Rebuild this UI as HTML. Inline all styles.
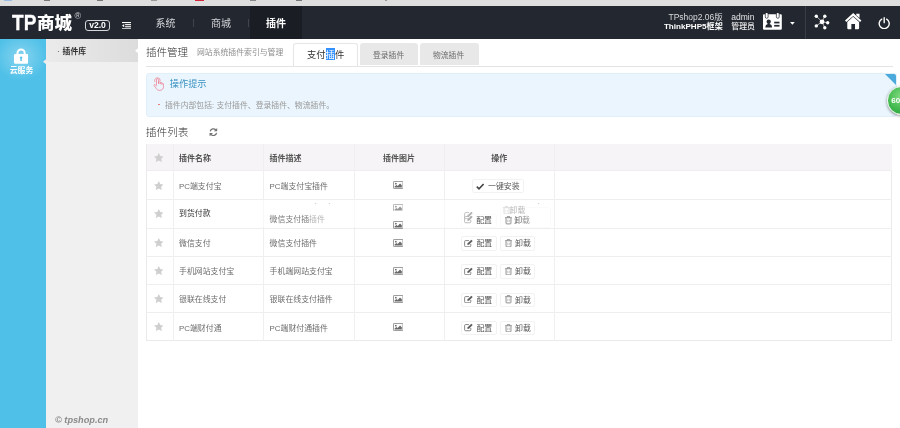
<!DOCTYPE html>
<html lang="zh-CN">
<head>
<meta charset="utf-8">
<title>TPshop 插件管理</title>
<style>
*{box-sizing:border-box;margin:0;padding:0}
html,body{width:900px;height:428px;overflow:hidden;background:#fff}
body{font-family:"Liberation Sans","Noto Sans CJK SC",sans-serif;color:#333;position:relative;font-size:8px;line-height:1}
.a{position:absolute;white-space:nowrap}
#strip{left:0;top:0;width:900px;height:5.5px;background:#dedede}
#hd{left:0;top:5.5px;width:900px;height:33px;background:#23272f}
#hd .act{left:249.5px;top:0;width:52px;height:33px;background:#1a1d24}
#hd .sep{width:1px;height:8px;top:13px;background:#41444c}
.nav{top:19px;font-size:10px;line-height:10px;color:#d4d6da}
#side{left:0;top:38.5px;width:46px;height:390px;background:#4fc0e8}
#sub{left:46px;top:38.5px;width:92px;height:390px;background:#f1f0f1}
#sub .cur{left:0;top:0;width:92px;height:23.5px;background:linear-gradient(90deg,#ebebeb,#dcdcdc)}
#main{left:138px;top:38.5px;width:762px;height:390px;background:#fff}
table{border-collapse:collapse}
.t{font-size:7.9px;line-height:8px;color:#6c6c6c}
.th{font-size:8px;line-height:8px;color:#555;font-weight:bold}
.vl{width:1px;background:#f0eef0;top:144px;height:197px}
.hl{height:1px;background:#efedef;left:146px;width:746px}
.btn{height:14.5px;border:1px solid #f3f2f3;border-radius:2px;background:#fff}
</style>
</head>
<body>
<div id="w" class="a" style="left:0;top:0;width:900px;height:428px;will-change:transform">
<div id="strip" class="a"><i class="a" style="left:4px;top:0;width:8px;height:1.2px;background:#9dbde9"></i><i class="a" style="left:44px;top:0;width:6px;height:1.2px;background:#777"></i><i class="a" style="left:97px;top:0;width:6px;height:1.2px;background:#777"></i><i class="a" style="left:151px;top:0;width:6px;height:1.2px;background:#999"></i><i class="a" style="left:195px;top:0;width:9px;height:1.2px;background:#d3263a"></i><i class="a" style="left:250px;top:0;width:6px;height:1.2px;background:#888"></i><i class="a" style="left:296px;top:0;width:6px;height:1.2px;background:#777"></i><i class="a" style="left:385px;top:0;width:1.5px;height:1.2px;background:#999"></i></div>

<div id="hd" class="a">
  <div class="a act"></div>
  <div class="a sep" style="left:193px"></div>
  <div class="a sep" style="left:248px"></div>
  <div class="a" style="left:804.5px;top:0;width:1px;height:33px;background:#3a3d46"></div>
</div>

<!-- logo -->
<div class="a" id="lg1" style="left:12.2px;top:9.2px;font-size:22.8px;line-height:26px;font-weight:bold;color:#fff;-webkit-text-stroke:.3px #fff;transform:scaleX(.835);transform-origin:0 0">TP</div>
<div class="a" id="lg2" style="left:37.1px;top:11.3px;font-size:17.5px;line-height:24px;font-weight:900;color:#fff;letter-spacing:0">商城</div>
<div class="a" id="lg3" style="left:74.5px;top:12.2px;font-size:9px;line-height:9px;color:#d0d2d6">®</div>
<div class="a" id="ver" style="left:85px;top:20px;width:25px;height:11px;border:1px solid #d4d6d9;border-radius:3px;color:#fff;font-weight:bold;font-size:8.6px;line-height:9px;text-align:center">v2.0</div>
<svg class="a" style="left:121.800px;top:21.800px" width="9.600" height="7.400" viewBox="0 0 19.2 14.8"><g fill="#fff"><rect x="0" y="0" width="19.200" height="2.200"/><rect x="6.200" y="4.200" width="13" height="2.200"/><rect x="6.200" y="8.400" width="13" height="2.200"/><rect x="0" y="12.600" width="19.200" height="2.200"/><path d="M0 7.400L4.400 4.200V10.600Z"/></g></svg>

<div class="a nav" id="n1" style="left:155.6px">系统</div>
<div class="a nav" id="n2" style="left:211px">商城</div>
<div class="a nav" id="n3" style="left:266px;color:#fff;font-weight:bold">插件</div>

<div class="a" id="r1" style="right:177.2px;top:12.9px;font-size:8.5px;line-height:9px;color:#d9dadd">TPshop2.06版</div>
<div class="a" id="r2" style="right:177.2px;top:22.1px;font-size:8.1px;line-height:9px;color:#fff;font-weight:bold">ThinkPHP5框架</div>
<div class="a" id="r3" style="left:731.3px;top:12.9px;font-size:8.5px;line-height:9px;color:#e4e5e8">admin</div>
<div class="a" id="r4" style="left:731.3px;top:22.1px;font-size:7.9px;line-height:9px;color:#f0f0f2;font-weight:500">管理员</div>
<!-- id card -->
<svg class="a" style="left:763.4px;top:13.2px" width="18.8" height="16.8" viewBox="0 0 37.6 33.6"><path fill="#fff" d="M2 2.600h33.600a2 2 0 0 1 2 2v26.800a2 2 0 0 1-2 2H2a2 2 0 0 1-2-2V4.600a2 2 0 0 1 2-2z"/><rect x="4.600" y="-1" width="5.600" height="11.600" rx="2.800" fill="#fff" stroke="#2a2d36" stroke-width="1.500"/><rect x="26.800" y="-1" width="5.600" height="11.600" rx="2.800" fill="#fff" stroke="#2a2d36" stroke-width="1.500"/><circle cx="11.400" cy="17.400" r="4.300" fill="#23272f"/><path d="M4.800 28.800c0-4.600 2.600-6.600 6.600-6.600s6.600 2 6.600 6.600z" fill="#23272f"/><rect x="9.400" y="19" width="4" height="5" fill="#23272f"/><rect x="22.400" y="17.400" width="10.600" height="3.400" fill="#23272f"/><rect x="22.400" y="23.800" width="10.600" height="3.400" fill="#23272f"/></svg>
<svg class="a" style="left:790.3px;top:21.8px" width="4.8" height="2.8" viewBox="0 0 10 6"><path d="M0 0h10L5 6z" fill="#fff"/></svg>
<!-- network -->
<svg class="a" style="left:814px;top:14.4px" width="16" height="16" viewBox="0 0 32 32"><g stroke="#fff" stroke-width="1.300"><path d="M4.600 4.400L16 15.600M21.600 4.400L16 15.600M27.400 17.600L16 15.600M4.600 23.800L16 15.600M21.600 27.400L16 15.600"/></g><g fill="#fff"><circle cx="16" cy="15.600" r="4.800"/><circle cx="4.600" cy="4.400" r="3.400"/><circle cx="21.600" cy="4.400" r="3.400"/><circle cx="27.400" cy="17.600" r="3.400"/><circle cx="4.600" cy="23.800" r="3.400"/><circle cx="21.600" cy="27.400" r="3.400"/></g></svg>
<!-- home -->
<svg class="a" style="left:845.4px;top:13.4px" width="16.4" height="16.2" viewBox="0 0 33 32.400"><path fill="#fff" d="M16.500 0L33 15 30.400 18.200 16.500 5.800 2.600 18.200 0 15z"/><path fill="#fff" d="M16.500 7.600L28.400 18.200v12.600a1.600 1.600 0 0 1-1.600 1.600H20.200v-10.400h-7.400v10.400H6.200a1.600 1.600 0 0 1-1.600-1.600V18.200z"/><path fill="#fff" d="M22.600 1.200h6.600v9l-6.600-5.800z"/></svg>
<!-- power -->
<svg class="a" style="left:878px;top:16.8px" width="12.4" height="11.8" viewBox="0 0 25 24"><path d="M7.500 4.500A10.200 10.200 0 1 0 17.500 4.500" fill="none" stroke="#fff" stroke-width="2.800" stroke-linecap="round"/><path d="M12.500 1.500V11.500" stroke="#fff" stroke-width="2.800" stroke-linecap="round"/></svg>

<div id="side" class="a">
  <div class="a" style="left:0;top:0;width:46px;height:50px;background:radial-gradient(ellipse 26px 24px at 21px 18px,rgba(255,255,255,.32),rgba(255,255,255,0) 100%)"></div>
  <svg class="a" style="left:13.900px;top:9.400px" width="14.200" height="15.800" viewBox="0 0 28.4 31.6"><path d="M7 14V10a7.200 7.200 0 0 1 14.400 0V14" fill="none" stroke="#fff" stroke-width="4"/><rect x="0" y="11.800" width="28.400" height="19.800" rx="2.500" fill="#fff"/><circle cx="14.200" cy="19.400" r="2.500" fill="#62c6ea"/><path d="M13 19.400h2.400l.5 6.400h-3.400z" fill="#62c6ea"/></svg>
  <div class="a" id="yun" style="left:9.7px;top:27.8px;font-size:7.9px;line-height:9px;color:#fff;font-weight:bold">云服务</div>
  <svg class="a" style="left:42.6px;top:20.6px" width="3.4" height="5.4" viewBox="0 0 7 11"><path d="M7 0V11L0 5.500z" fill="#efeeef"/></svg>
</div>

<div id="sub" class="a">
  <div class="a cur"></div>
  <div class="a" style="left:11px;top:8.6px;font-size:8px;line-height:9px;color:#555">·</div>
  <div class="a" id="cur" style="left:16.5px;top:8.9px;font-size:7.9px;line-height:9px;color:#333;font-weight:bold">插件库</div>
  <svg class="a" style="left:88.8px;top:9.3px" width="3.2" height="5.4" viewBox="0 0 7 11"><path d="M7 0V11L0 5.500z" fill="#fff"/></svg>
  <div class="a" id="copy" style="left:9px;top:376.4px;font-size:9.2px;line-height:10px;color:#8a8a8a;font-weight:bold;font-style:italic">© tpshop.cn</div>
</div>

<div id="main" class="a"></div>

<!-- title + tabs -->
<div class="a" id="ttl" style="left:146px;top:45.6px;font-size:10.5px;line-height:12px;color:#2e2e2e;font-weight:300">插件管理</div>
<div class="a" id="stl" style="left:197px;top:48.4px;font-size:7.85px;line-height:9px;color:#8e8e8e">网站系统插件索引与管理</div>
<div class="a" style="left:146px;top:65.8px;width:747px;height:1px;background:#e4e4e4"></div>
<div class="a" style="left:293.4px;top:43.4px;width:64.4px;height:23px;background:#fff;border:1px solid #e6e6e6;border-bottom:0;border-radius:3px 3px 0 0"></div>
<div class="a" style="left:359.5px;top:43.4px;width:58.4px;height:22px;background:#e9e8e9;border-radius:3px 3px 0 0"></div>
<div class="a" style="left:420px;top:43.4px;width:58.6px;height:22px;background:#e9e8e9;border-radius:3px 3px 0 0"></div>
<div class="a" style="left:326px;top:47.8px;width:9.3px;height:12.2px;background:#3390ff"></div>
<div class="a" id="tb1" style="left:307px;top:49.5px;font-size:9.3px;line-height:11px;color:#333">支付<span style="color:#fff">插</span>件</div>
<div class="a" id="tb2" style="left:373px;top:50.6px;font-size:7.8px;line-height:9px;color:#6a6a6a">登录插件</div>
<div class="a" id="tb3" style="left:433px;top:50.6px;font-size:7.8px;line-height:9px;color:#6a6a6a">物流插件</div>

<!-- tip box -->
<div class="a" style="left:146px;top:73px;width:751px;height:44px;background:#eaf5fd;border:1px solid #e0f0fb;border-radius:3px;overflow:hidden">
  <svg class="a" style="right:-1px;top:-1px" width="13" height="13" viewBox="0 0 13 13"><path d="M0 0H13V13z" fill="#4ba9dc"/></svg>
</div>
<svg class="a" style="left:151.600px;top:76.800px" width="12" height="13.800" viewBox="0 0 24 28"><g fill="none" stroke="#ee8597" stroke-width="1.600" stroke-linecap="round" stroke-linejoin="round"><path d="M9 16V5.500a2 2 0 0 1 4 0V13"/><path d="M13 13v-1.500a1.800 1.800 0 0 1 3.600 0V13.500"/><path d="M16.600 13.500v-.8a1.700 1.700 0 0 1 3.400 0v1.800"/><path d="M20 14.500a1.600 1.600 0 0 1 3.200 0V19c0 5-2.500 8-7 8h-2c-3 0-4.500-1.500-6-4L4 17.500c-1-1.800 1.200-3.300 2.600-1.800L9 18.500"/><path d="M5.500 9.500A6 6 0 0 1 11 1.500a6 6 0 0 1 5.600 6.500"/></g></svg>
<div class="a" id="tip1" style="left:169.8px;top:78.8px;font-size:9.2px;line-height:11px;color:#3a92c2">操作提示</div>
<div class="a" style="left:158.4px;top:103.8px;width:1.6px;height:1.6px;background:#ef6a6a;border-radius:1px"></div>
<div class="a" id="tip2" style="left:165px;top:100.6px;font-size:7.85px;line-height:9px;color:#999">插件内部包括: 支付插件、登录插件、物流插件。</div>
<!-- green badge -->
<div class="a" style="left:887.2px;top:85.8px;width:29px;height:29px;border-radius:50%;background:radial-gradient(circle at 45% 35%,#7ed97e,#3cb64a 60%,#2a9a3a);border:1.500px solid #e9f3e9;box-shadow:0 1px 3px rgba(0,0,0,.45)"></div>
<div class="a" id="g60" style="left:891.2px;top:96.4px;font-size:8px;line-height:9px;color:#fff;font-weight:bold">60</div>

<!-- list title -->
<div class="a" id="lst" style="left:145.8px;top:125.7px;font-size:10.7px;line-height:12px;color:#2e2e2e;font-weight:300">插件列表</div>
<svg class="a" style="left:208.800px;top:127.600px" width="8.800" height="8.400" viewBox="0 0 18 17"><g fill="none" stroke="#737373" stroke-width="2.600"><path d="M2.500 7A6.600 6.600 0 0 1 14 4"/><path d="M15.500 10A6.600 6.600 0 0 1 4 13"/></g><path d="M16.800 0v6.800H10z" fill="#737373"/><path d="M1.200 17v-6.800H8z" fill="#737373"/></svg>
<div class="a" style="left:146px;top:143.700px;width:746px;height:197.800px;border:1px solid #ece9ec;border-top-color:#e4e2e4;background:#fff"></div>
<div class="a" style="left:146.500px;top:144.200px;width:745px;height:26.500px;background:#f6f4f6"></div>
<div class="a hl" style="top:170.0px"></div>
<div class="a hl" style="top:198.9px"></div>
<div class="a hl" style="top:227.5px"></div>
<div class="a hl" style="top:255.6px"></div>
<div class="a hl" style="top:283.7px"></div>
<div class="a hl" style="top:311.8px"></div>
<div class="a vl" style="left:172.8px"></div>
<div class="a vl" style="left:263.2px"></div>
<div class="a vl" style="left:354.2px"></div>
<div class="a vl" style="left:444.2px"></div>
<div class="a vl" style="left:554.2px"></div>
<svg class="a" style="left:153.500px;top:152.9px" width="9.600" height="9.100" viewBox="0 0 20 19"><path d="M10 0l3.090 6.260L20 7.270l-5 4.870 1.180 6.880L10 15.770l-6.180 3.250L5 12.140 0 7.270l6.910-1.010z" fill="#cfcfcf"/></svg>
<div class="a th" id="h1" style="left:179px;top:154.600px">插件名称</div>
<div class="a th" id="h2" style="left:269.600px;top:154.600px">插件描述</div>
<div class="a th" id="h3" style="left:383px;top:154.600px">插件图片</div>
<div class="a th" id="h4" style="left:491.300px;top:154.600px">操作</div>
<svg class="a" style="left:153.500px;top:180.7px" width="9.600" height="9.100" viewBox="0 0 20 19"><path d="M10 0l3.090 6.260L20 7.270l-5 4.870 1.180 6.880L10 15.770l-6.180 3.250L5 12.140 0 7.270l6.910-1.010z" fill="#cfcfcf"/></svg>
<div class="a t" id="nm0" style="left:179px;top:183.0px">PC端支付宝</div>
<div class="a t" id="ds0" style="left:269.600px;top:183.0px">PC端支付宝插件</div>
<svg class="a" style="left:392.500px;top:181.4px" width="10.400" height="8" viewBox="0 0 20 16" preserveAspectRatio="none"><rect x=".8" y=".8" width="18.400" height="14.400" rx="1.500" fill="#fff" stroke="#7a7a7a" stroke-width="1.600"/><circle cx="5.500" cy="5.300" r="1.700" fill="#6a6a6a"/><path d="M3 13V11l3.500-3 2.500 2 4.500-5L17 8.500V13z" fill="#6a6a6a"/></svg>
<div class="a btn" style="left:471.500px;top:178.5px;width:52.500px"></div>
<svg class="a" style="left:476.0px;top:182.9px" width="8.400" height="6.800" viewBox="0 0 17 14"><path d="M1.500 7.500L6 12 15.500 2" fill="none" stroke="#444" stroke-width="3.200"/></svg>
<div class="a t" id="bt0" style="left:488px;top:182.6px;color:#555">一键安装</div>
<svg class="a" style="left:153.500px;top:209.4px" width="9.600" height="9.100" viewBox="0 0 20 19"><path d="M10 0l3.090 6.260L20 7.270l-5 4.870 1.180 6.880L10 15.770l-6.180 3.250L5 12.140 0 7.270l6.910-1.010z" fill="#cfcfcf"/></svg>
<div class="a t" id="n1" style="left:179px;top:210.2px;color:#333">到货付款</div>
<svg class="a" style="left:153.500px;top:237.8px" width="9.600" height="9.100" viewBox="0 0 20 19"><path d="M10 0l3.090 6.260L20 7.270l-5 4.870 1.180 6.880L10 15.770l-6.180 3.250L5 12.140 0 7.270l6.910-1.010z" fill="#cfcfcf"/></svg>
<div class="a t" id="nm2" style="left:179px;top:240.1px">微信支付</div>
<div class="a t" id="ds2" style="left:269.600px;top:240.1px">微信支付插件</div>
<svg class="a" style="left:392.500px;top:238.6px" width="10.400" height="8" viewBox="0 0 20 16" preserveAspectRatio="none"><rect x=".8" y=".8" width="18.400" height="14.400" rx="1.500" fill="#fff" stroke="#7a7a7a" stroke-width="1.600"/><circle cx="5.500" cy="5.300" r="1.700" fill="#6a6a6a"/><path d="M3 13V11l3.500-3 2.500 2 4.500-5L17 8.500V13z" fill="#6a6a6a"/></svg>
<div class="a btn" style="left:461px;top:236.4px;width:36px"></div>
<div class="a btn" style="left:500px;top:236.4px;width:35.200px"></div>
<svg class="a" style="left:464.3px;top:238.6px" width="9.400" height="8.400" viewBox="0 0 18 16"><path d="M13 9.500V13a1.800 1.800 0 0 1-1.800 1.800H3A1.800 1.800 0 0 1 1.200 13V4.800A1.800 1.800 0 0 1 3 3h6.500" fill="none" stroke="#686868" stroke-width="1.500"/><path d="M7 8.200L14 1.200l2.600 2.600-7 7-3.200.6z" fill="#5e5e5e"/></svg>
<svg class="a" style="left:505.0px;top:239.1px" width="7" height="8.400" viewBox="0 0 14 17"><path d="M2 4.500V14.500a1.500 1.500 0 0 0 1.500 1.500h7a1.500 1.500 0 0 0 1.500-1.500V4.500" fill="none" stroke="#6a6a6a" stroke-width="1.500"/><path d="M0 3.500h14" stroke="#6a6a6a" stroke-width="1.500"/><path d="M4.500 3V1h5v2" fill="none" stroke="#6a6a6a" stroke-width="1.300"/><path d="M5.400 7.500v5M8.600 7.500v5" stroke="#8a8a8a" stroke-width="1"/></svg>
<div class="a t" id="cf2" style="left:476.400px;top:240.3px;color:#555">配置</div>
<div class="a t" id="un2" style="left:515px;top:240.3px;color:#555">卸载</div>
<svg class="a" style="left:153.500px;top:265.8px" width="9.600" height="9.100" viewBox="0 0 20 19"><path d="M10 0l3.090 6.260L20 7.270l-5 4.870 1.180 6.880L10 15.770l-6.180 3.250L5 12.140 0 7.270l6.910-1.010z" fill="#cfcfcf"/></svg>
<div class="a t" id="nm3" style="left:179px;top:268.1px">手机网站支付宝</div>
<div class="a t" id="ds3" style="left:269.600px;top:268.1px">手机端网站支付宝</div>
<svg class="a" style="left:392.500px;top:266.6px" width="10.400" height="8" viewBox="0 0 20 16" preserveAspectRatio="none"><rect x=".8" y=".8" width="18.400" height="14.400" rx="1.500" fill="#fff" stroke="#7a7a7a" stroke-width="1.600"/><circle cx="5.500" cy="5.300" r="1.700" fill="#6a6a6a"/><path d="M3 13V11l3.500-3 2.500 2 4.500-5L17 8.500V13z" fill="#6a6a6a"/></svg>
<div class="a btn" style="left:461px;top:264.4px;width:36px"></div>
<div class="a btn" style="left:500px;top:264.4px;width:35.200px"></div>
<svg class="a" style="left:464.3px;top:266.7px" width="9.400" height="8.400" viewBox="0 0 18 16"><path d="M13 9.500V13a1.800 1.800 0 0 1-1.800 1.800H3A1.800 1.800 0 0 1 1.200 13V4.800A1.800 1.800 0 0 1 3 3h6.500" fill="none" stroke="#686868" stroke-width="1.500"/><path d="M7 8.200L14 1.200l2.600 2.600-7 7-3.200.6z" fill="#5e5e5e"/></svg>
<svg class="a" style="left:505.0px;top:267.1px" width="7" height="8.400" viewBox="0 0 14 17"><path d="M2 4.500V14.500a1.500 1.500 0 0 0 1.500 1.500h7a1.500 1.500 0 0 0 1.500-1.500V4.500" fill="none" stroke="#6a6a6a" stroke-width="1.500"/><path d="M0 3.500h14" stroke="#6a6a6a" stroke-width="1.500"/><path d="M4.500 3V1h5v2" fill="none" stroke="#6a6a6a" stroke-width="1.300"/><path d="M5.400 7.500v5M8.600 7.500v5" stroke="#8a8a8a" stroke-width="1"/></svg>
<div class="a t" id="cf3" style="left:476.400px;top:268.3px;color:#555">配置</div>
<div class="a t" id="un3" style="left:515px;top:268.3px;color:#555">卸载</div>
<svg class="a" style="left:153.500px;top:294.0px" width="9.600" height="9.100" viewBox="0 0 20 19"><path d="M10 0l3.090 6.260L20 7.270l-5 4.870 1.180 6.880L10 15.770l-6.180 3.250L5 12.140 0 7.270l6.910-1.010z" fill="#cfcfcf"/></svg>
<div class="a t" id="nm4" style="left:179px;top:296.2px">银联在线支付</div>
<div class="a t" id="ds4" style="left:269.600px;top:296.2px">银联在线支付插件</div>
<svg class="a" style="left:392.500px;top:294.8px" width="10.400" height="8" viewBox="0 0 20 16" preserveAspectRatio="none"><rect x=".8" y=".8" width="18.400" height="14.400" rx="1.500" fill="#fff" stroke="#7a7a7a" stroke-width="1.600"/><circle cx="5.500" cy="5.300" r="1.700" fill="#6a6a6a"/><path d="M3 13V11l3.500-3 2.500 2 4.500-5L17 8.500V13z" fill="#6a6a6a"/></svg>
<div class="a btn" style="left:461px;top:292.6px;width:36px"></div>
<div class="a btn" style="left:500px;top:292.6px;width:35.200px"></div>
<svg class="a" style="left:464.3px;top:294.8px" width="9.400" height="8.400" viewBox="0 0 18 16"><path d="M13 9.500V13a1.800 1.800 0 0 1-1.800 1.800H3A1.800 1.800 0 0 1 1.200 13V4.800A1.800 1.800 0 0 1 3 3h6.500" fill="none" stroke="#686868" stroke-width="1.500"/><path d="M7 8.200L14 1.200l2.600 2.600-7 7-3.200.6z" fill="#5e5e5e"/></svg>
<svg class="a" style="left:505.0px;top:295.2px" width="7" height="8.400" viewBox="0 0 14 17"><path d="M2 4.500V14.500a1.500 1.500 0 0 0 1.500 1.500h7a1.500 1.500 0 0 0 1.500-1.500V4.500" fill="none" stroke="#6a6a6a" stroke-width="1.500"/><path d="M0 3.500h14" stroke="#6a6a6a" stroke-width="1.500"/><path d="M4.500 3V1h5v2" fill="none" stroke="#6a6a6a" stroke-width="1.300"/><path d="M5.400 7.500v5M8.600 7.500v5" stroke="#8a8a8a" stroke-width="1"/></svg>
<div class="a t" id="cf4" style="left:476.400px;top:296.5px;color:#555">配置</div>
<div class="a t" id="un4" style="left:515px;top:296.5px;color:#555">卸载</div>
<svg class="a" style="left:153.500px;top:322.4px" width="9.600" height="9.100" viewBox="0 0 20 19"><path d="M10 0l3.090 6.260L20 7.270l-5 4.870 1.180 6.880L10 15.770l-6.180 3.250L5 12.140 0 7.270l6.910-1.010z" fill="#cfcfcf"/></svg>
<div class="a t" id="nm5" style="left:179px;top:324.6px">PC端财付通</div>
<div class="a t" id="ds5" style="left:269.600px;top:324.6px">PC端财付通插件</div>
<svg class="a" style="left:392.500px;top:323.1px" width="10.400" height="8" viewBox="0 0 20 16" preserveAspectRatio="none"><rect x=".8" y=".8" width="18.400" height="14.400" rx="1.500" fill="#fff" stroke="#7a7a7a" stroke-width="1.600"/><circle cx="5.500" cy="5.300" r="1.700" fill="#6a6a6a"/><path d="M3 13V11l3.500-3 2.500 2 4.500-5L17 8.500V13z" fill="#6a6a6a"/></svg>
<div class="a btn" style="left:461px;top:320.9px;width:36px"></div>
<div class="a btn" style="left:500px;top:320.9px;width:35.200px"></div>
<svg class="a" style="left:464.3px;top:323.2px" width="9.400" height="8.400" viewBox="0 0 18 16"><path d="M13 9.500V13a1.800 1.800 0 0 1-1.800 1.800H3A1.800 1.800 0 0 1 1.200 13V4.800A1.800 1.800 0 0 1 3 3h6.500" fill="none" stroke="#686868" stroke-width="1.500"/><path d="M7 8.200L14 1.200l2.600 2.600-7 7-3.200.6z" fill="#5e5e5e"/></svg>
<svg class="a" style="left:505.0px;top:323.6px" width="7" height="8.400" viewBox="0 0 14 17"><path d="M2 4.500V14.500a1.500 1.500 0 0 0 1.500 1.500h7a1.500 1.500 0 0 0 1.500-1.500V4.500" fill="none" stroke="#6a6a6a" stroke-width="1.500"/><path d="M0 3.500h14" stroke="#6a6a6a" stroke-width="1.500"/><path d="M4.500 3V1h5v2" fill="none" stroke="#6a6a6a" stroke-width="1.300"/><path d="M5.400 7.500v5M8.600 7.500v5" stroke="#8a8a8a" stroke-width="1"/></svg>
<div class="a t" id="cf5" style="left:476.400px;top:324.8px;color:#555">配置</div>
<div class="a t" id="un5" style="left:515px;top:324.8px;color:#555">卸载</div>

<div class="a" style="left:214px;top:200.4px;width:332px;height:27px;background:rgba(255,255,255,.6)"></div>
<svg class="a" style="left:314px;top:202.6px" width="3" height="1.800" viewBox="0 0 6 3.600"><path d="M.5 3.300L3 .8 5.500 3.300" fill="none" stroke="#aaa" stroke-width="1.200"/></svg><svg class="a" style="left:328.2px;top:202.6px" width="3" height="1.800" viewBox="0 0 6 3.600"><path d="M.5 3.300L3 .8 5.500 3.300" fill="none" stroke="#aaa" stroke-width="1.200"/></svg><svg class="a" style="left:537.2px;top:202.6px" width="3" height="1.800" viewBox="0 0 6 3.600"><path d="M.5 3.300L3 .8 5.500 3.300" fill="none" stroke="#aaa" stroke-width="1.200"/></svg>
<div class="a t" style="left:269.600px;top:215.600px;color:#777">微信支付插<span style="opacity:.55">插件</span></div>
<div class="a" style="left:392.500px;top:204.300px;width:10.500px;height:6.500px;overflow:hidden;opacity:.7"><svg class="a" style="left:0;top:0" width="10.400" height="8" viewBox="0 0 20 16" preserveAspectRatio="none"><rect x=".8" y=".8" width="18.400" height="14.400" rx="1.500" fill="#fff" stroke="#7a7a7a" stroke-width="1.600"/><circle cx="5.500" cy="5.300" r="1.700" fill="#6a6a6a"/><path d="M3 13V11l3.500-3 2.500 2 4.500-5L17 8.500V13z" fill="#6a6a6a"/></svg></div>
<svg class="a" style="left:392.500px;top:220.7px" width="10.400" height="8" viewBox="0 0 20 16" preserveAspectRatio="none"><rect x=".8" y=".8" width="18.400" height="14.400" rx="1.500" fill="#fff" stroke="#7a7a7a" stroke-width="1.600"/><circle cx="5.500" cy="5.300" r="1.700" fill="#6a6a6a"/><path d="M3 13V11l3.500-3 2.500 2 4.500-5L17 8.500V13z" fill="#6a6a6a"/></svg>
<div class="a btn" style="left:461px;top:213.500px;width:36px;opacity:.3"></div>
<div class="a btn" style="left:500px;top:207px;width:51px;height:20.500px;opacity:.35"></div>
<svg class="a" style="left:464.3px;top:210.600px" width="9.400" height="8.400" viewBox="0 0 18 16"><path d="M13 9.500V13a1.800 1.800 0 0 1-1.800 1.800H3A1.800 1.800 0 0 1 1.200 13V4.800A1.800 1.800 0 0 1 3 3h6.500" fill="none" stroke="#b4b4b4" stroke-width="1.500"/><path d="M7 8.200L14 1.200l2.600 2.600-7 7-3.200.6z" fill="#b4b4b4"/></svg>
<svg class="a" style="left:464.3px;top:215.400px" width="9.400" height="8.400" viewBox="0 0 18 16"><path d="M13 9.500V13a1.800 1.800 0 0 1-1.800 1.800H3A1.800 1.800 0 0 1 1.200 13V4.800A1.800 1.800 0 0 1 3 3h6.500" fill="none" stroke="#adadad" stroke-width="1.600"/><path d="M7 8.200L14 1.200l2.600 2.600-7 7-3.200.6z" fill="#adadad"/></svg>
<svg class="a" style="left:505.0px;top:216.4px" width="7" height="8.400" viewBox="0 0 14 17"><path d="M2 4.500V14.500a1.500 1.500 0 0 0 1.500 1.500h7a1.500 1.500 0 0 0 1.500-1.500V4.500" fill="none" stroke="#6a6a6a" stroke-width="1.500"/><path d="M0 3.500h14" stroke="#6a6a6a" stroke-width="1.500"/><path d="M4.500 3V1h5v2" fill="none" stroke="#6a6a6a" stroke-width="1.300"/><path d="M5.400 7.500v5M8.600 7.500v5" stroke="#8a8a8a" stroke-width="1"/></svg>
<svg class="a" style="left:503.2px;top:205.600px" width="7" height="8.400" viewBox="0 0 14 17"><path d="M2 4.500V14.500a1.500 1.500 0 0 0 1.500 1.500h7a1.500 1.500 0 0 0 1.500-1.500V4.500" fill="none" stroke="#cfcfcf" stroke-width="1.500"/><path d="M0 3.500h14" stroke="#cfcfcf" stroke-width="1.500"/><path d="M4.500 3V1h5v2" fill="none" stroke="#cfcfcf" stroke-width="1.300"/><path d="M5.400 7.500v5M8.600 7.500v5" stroke="#ddd" stroke-width="1"/></svg>
<div class="a t" style="left:476.200px;top:217px;color:#555">配置</div>
<div class="a t" style="left:514.200px;top:217px;color:#666">卸<span style="opacity:.7">载</span></div>
<div class="a t" style="left:509.500px;top:206.600px;color:#b8b8b8">卸载</div>

</div>
</body>
</html>
